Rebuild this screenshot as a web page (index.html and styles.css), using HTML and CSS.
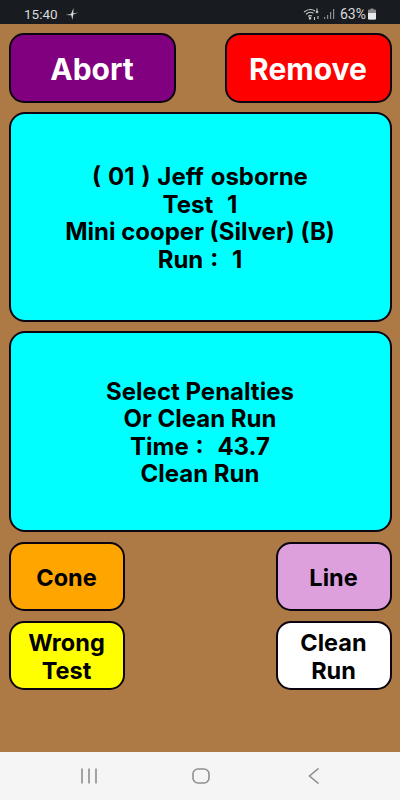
FILE: index.html
```html
<!DOCTYPE html>
<html lang="en">
<head>
<meta charset="utf-8">
<title>Run penalties</title>
<link rel="stylesheet" href="styles.css">
</head>
<body>
<div class="phone">
  <header class="status">
    <div class="status-left">
      <span>15:40</span>
      <svg class="plane" width="14" height="14" viewBox="0 0 14 14"><path d="M0.500 8 L6 7 L8.500 1 L8.300 6.500 L13.500 5.500 L8.300 7.600 L7.300 13 L6.300 8.200 Z" fill="#d8dadb"/></svg>
    </div>
    <div class="status-right">
      <svg width="18" height="14" viewBox="0 0 18 14" fill="none" stroke="#c9cbcc" stroke-width="1.1"><path d="M1 5 Q7 0.5 12 4"/><path d="M3 7.2 Q7 4 10.5 6.2"/><path d="M5 9.4 Q7 8 9 9"/><circle cx="7" cy="11.3" r=".8" fill="#c9cbcc"/><path d="M14 1.5v4M12.8 4.5l1.2 1.2 1.2-1.2M11.5 10v3M15 9v3"/></svg>
      <svg class="signal" width="13" height="12" viewBox="0 0 13 12"><path d="M1 9h1.200v2H1zM4 7h1.200v4H4zM7 4h1.200v7H7zM10 1h1.200v10H10z" fill="#8b8e90"/></svg>
      <span class="pct">63%</span>
      <svg width="8" height="12" viewBox="0 0 8 12"><path d="M2.500 0.500h3v1h1.500a1 1 0 0 1 1 1v8a1 1 0 0 1-1 1H1a1 1 0 0 1-1-1v-8a1 1 0 0 1 1-1h1.500z" fill="#8a8c8e"/><path d="M0 5h8v5.500a1 1 0 0 1-1 1H1a1 1 0 0 1-1-1z" fill="#e9eaeb"/></svg>
    </div>
  </header>
  <main class="app">
    <div class="row">
      <button class="btn big purple">Abort</button>
      <button class="btn big red">Remove</button>
    </div>
    <section class="card first">
      <p class="spaced">( 01 ) Jeff osborne</p>
      <p class="spaced">Test&nbsp; 1</p>
      <p>Mini cooper (Silver) (B)</p>
      <p class="spaced">Run :&nbsp; 1</p>
    </section>
    <section class="card second">
      <p>Select Penalties</p>
      <p>Or Clean Run</p>
      <p class="spaced">Time :&nbsp; 43.7</p>
      <p>Clean Run</p>
    </section>
    <div class="row small-row">
      <button class="btn small orange">Cone</button>
      <button class="btn small plum">Line</button>
    </div>
    <div class="row small-row">
      <button class="btn small yellow">Wrong<br>Test</button>
      <button class="btn small white">Clean<br>Run</button>
    </div>
  </main>
  <nav class="navbar">
    <svg width="18" height="16" viewBox="0 0 18 16" stroke="#8f8f8f" stroke-width="1.6" fill="none"><path d="M2 .5v15M9 .5v15M16 .5v15"/></svg>
    <svg width="22" height="16" viewBox="0 0 22 16" stroke="#8f8f8f" stroke-width="1.6" fill="none"><rect x="1" y="1" width="16" height="14" rx="5"/></svg>
    <svg width="12" height="16" viewBox="0 0 12 16" stroke="#8f8f8f" stroke-width="1.6" fill="none"><path d="M10.500 .5 L1.500 8 L10.500 15.500"/></svg>
  </nav>
</div>
</body>
</html>
```
FILE: styles.css
```css
* { box-sizing: border-box; }
html, body { margin: 0; padding: 0; }
body { font-family: Inter, Roboto, "Liberation Sans", sans-serif; }
.phone { width: 400px; height: 800px; display: flex; flex-direction: column; background: #ad7a45; overflow: hidden; }
.status { height: 24px; flex: none; background: #181c20; color: #d8dadb; font-size: 13.500px; font-family: Roboto, sans-serif; display: flex; justify-content: space-between; align-items: center; padding: 5px 24px 1px 24px; }
.status-left, .status-right { display: flex; align-items: center; }
.status-left { gap: 7px; }
.status-right { gap: 2px; }
.signal { margin-right: 2px; }
.pct { font-size: 14px; }
.app { flex: 1; display: flex; flex-direction: column; gap: 9px; padding: 9px 8.500px 0 8.500px; }
.row { display: flex; justify-content: space-between; }
.btn { border: 2px solid #0c0410; font-family: inherit; font-weight: 700; padding: 2px 0 0; display: block; }
.big { width: 167px; height: 70px; border-radius: 15px; font-size: 30px; color: #fff; }
.purple { background: #800080; }
.red { background: #ff0000; }
.card { background: #00ffff; border: 2px solid #0c0410; border-radius: 16px; display: flex; flex-direction: column; justify-content: center; align-items: center; font-size: 24px; font-weight: 700; line-height: 27.500px; padding-top: 2px; color: #000; }
.card p { margin: 0; }
.card .spaced { word-spacing: 1.200px; }
.first { height: 210px; }
.second { height: 201px; }
.small-row { margin-top: 1px; }
.small { width: 116px; height: 69px; border-radius: 15px; font-size: 23.500px; line-height: 27.500px; color: #000; }
.orange { background: #ffa500; }
.plum { background: #dda0dd; }
.yellow { background: #ffff00; }
.white { background: #fff; }
.navbar { height: 48px; flex: none; background: #f5f5f5; display: flex; gap: 94px; align-items: center; padding: 0 0 0 80px; }
```
